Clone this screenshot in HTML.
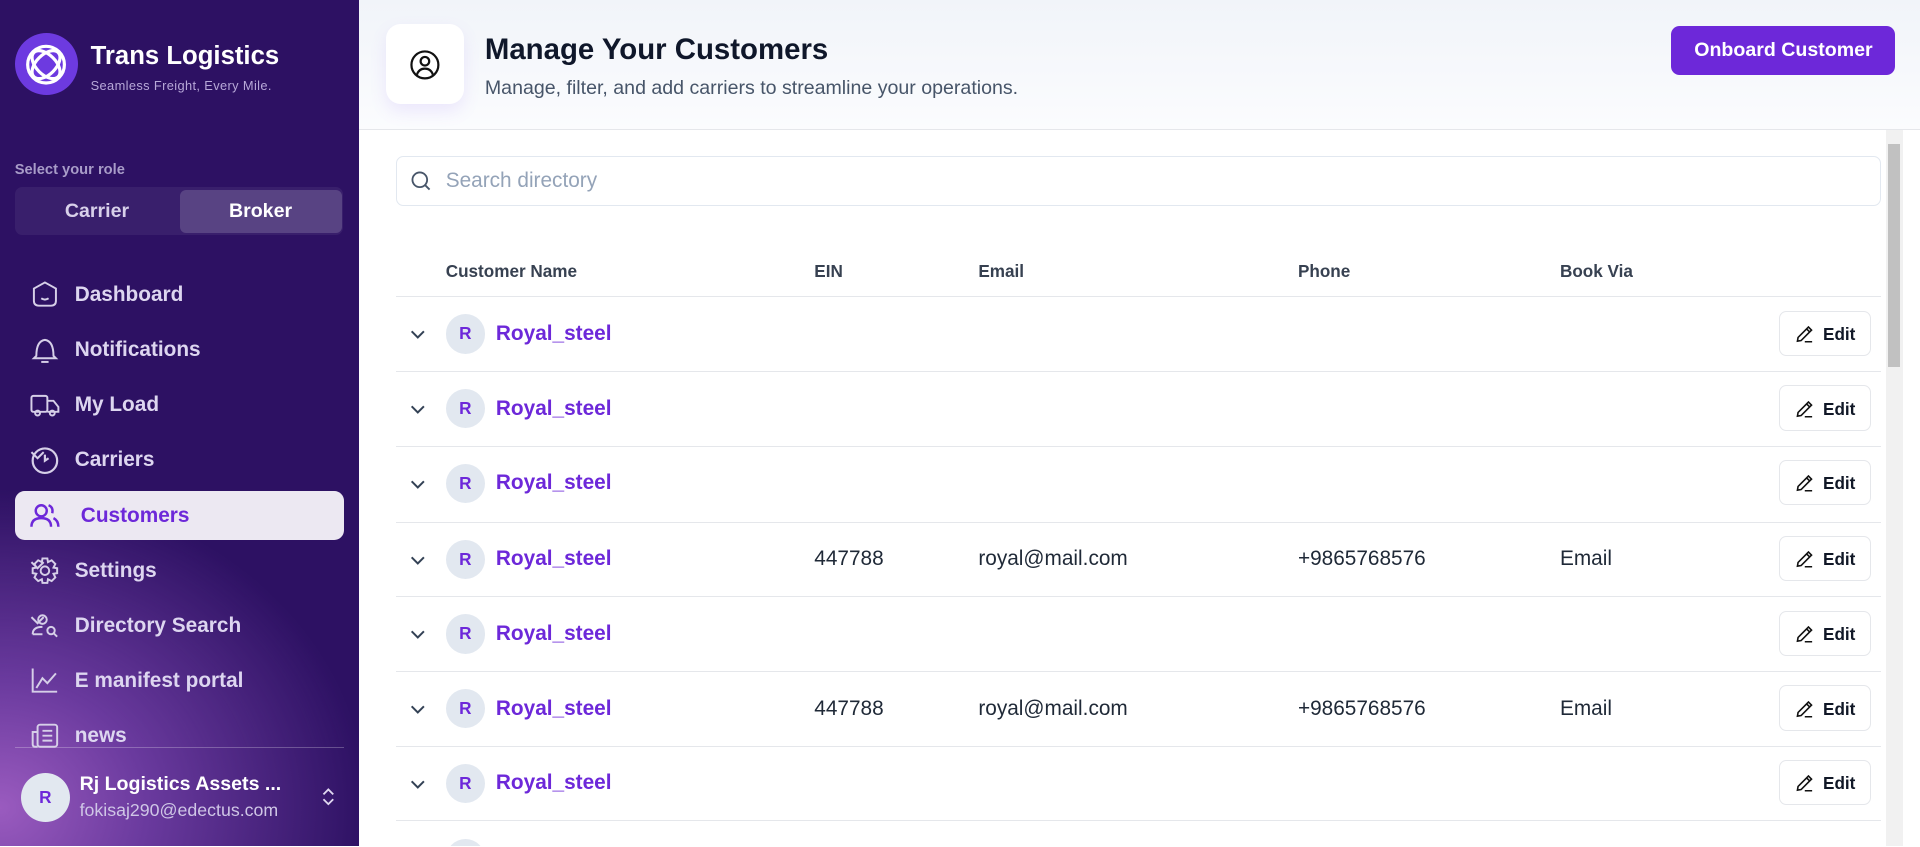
<!DOCTYPE html>
<html><head><meta charset="utf-8"><style>
*{box-sizing:border-box;margin:0;padding:0}
html,body{width:1920px;height:847px;overflow:hidden;background:#fff}
#w{zoom:1.22449;width:1568px;height:691px;position:relative;font-family:"Liberation Sans",sans-serif;overflow:hidden}
.sb{position:absolute;left:0;top:0;width:293px;height:691px;background:radial-gradient(ellipse 300px 260px at 0px 660px,#9a5bbf 0%,#6a3a9e 40%,rgba(46,16,100,0) 100%),#2d1163}
.abs{position:absolute}
.nav{position:absolute;left:12px;width:269px;height:40px;display:flex;align-items:center;color:#ddd6f0;font-size:17px;font-weight:bold}
.nav svg{position:absolute;left:12px;top:8px}
.nav span{position:absolute;left:49px}
.chev{position:absolute;left:240px;top:12px}
.main{position:absolute;left:293px;top:0;width:1275px;height:691px;overflow:hidden}
.hdr{position:absolute;left:0;top:0;width:1275px;height:106px;background:linear-gradient(#f1f4f9,#fbfcfe);border-bottom:1px solid #e5e7eb}
.th{position:absolute;top:213px;font-size:14px;font-weight:bold;color:#374151}
.row{position:absolute;left:30px;width:1213px;height:61px;border-top:1px solid #e5e7eb;overflow:hidden}
.row .cv{position:absolute;left:10px;top:22px}
.row .av{position:absolute;left:41px;top:14px;width:32px;height:32px;border-radius:50%;background:#e2e8f0;color:#6d28d9;font-size:14px;font-weight:bold;text-align:center;line-height:32px}
.row .nm{position:absolute;left:82px;top:20px;font-size:17px;font-weight:bold;color:#6d28d9}
.row .c{position:absolute;top:20px;font-size:17px;color:#1f2937}
.row .ed{position:absolute;left:1130px;top:11px;width:75px;height:37px;border:1px solid #e5e7eb;border-radius:6px;font-size:14px;font-weight:bold;color:#111827;background:#fff}
.row .ed svg{position:absolute;left:12px;top:10px}
.row .ed b{position:absolute;left:35px;top:10px}
</style></head><body><div id="w">
<div class="sb">
 <div class="abs" style="left:12px;top:27px;width:52px;height:51px;border-radius:50%;background:#6d3ae0"></div>
 <svg class="abs" style="left:20px;top:34px" width="36" height="37" viewBox="0 0 36 36" fill="none" stroke="#fff" stroke-width="2.6"><circle cx="18" cy="18" r="15"/><ellipse cx="18" cy="18" rx="14" ry="8" transform="rotate(45 18 18)"/><ellipse cx="18" cy="18" rx="14" ry="8" transform="rotate(-45 18 18)"/></svg>
 <div class="abs" style="left:74px;top:34px;color:#fff;font-size:21px;font-weight:bold">Trans Logistics</div>
 <div class="abs" style="left:74px;top:64px;color:#b7a8d8;font-size:10.5px;letter-spacing:0.3px">Seamless Freight, Every Mile.</div>
 <div class="abs" style="left:12px;top:132px;color:#a89cc8;font-size:12px;font-weight:bold">Select your role</div>
 <div class="abs" style="left:12px;top:153px;width:268px;height:39px;border-radius:6px;background:rgba(255,255,255,0.06)"></div>
 <div class="abs" style="left:147px;top:155px;width:132px;height:35px;border-radius:5px;background:rgba(255,255,255,0.16)"></div>
 <div class="abs" style="left:53px;top:163px;color:#d8d0ea;font-size:16px;font-weight:bold">Carrier</div>
 <div class="abs" style="left:187px;top:163px;color:#fff;font-size:16px;font-weight:bold">Broker</div>

 <div class="nav" style="top:221px"><svg width="26" height="24" viewBox="0 0 26 24" fill="none" stroke="#d6cfe8" stroke-width="1.6"><path d="M4 7 L13 2 L22 7 L22 17 Q22 21 18 21 L8 21 Q4 21 4 17Z"/><path d="M10 15 Q13 17 16 15"/></svg><span>Dashboard</span></div>
 <div class="nav" style="top:266px"><svg width="26" height="24" viewBox="0 0 26 24" fill="none" stroke="#d6cfe8" stroke-width="1.6"><path d="M6 17 Q6 5 13 4 Q20 5 20 17 L22 19 L4 19Z"/><path d="M10 22 L16 22"/></svg><span>Notifications</span></div>
 <div class="nav" style="top:311px"><svg width="26" height="24" viewBox="0 0 26 24" fill="none" stroke="#d6cfe8" stroke-width="1.6"><rect x="2" y="4" width="13" height="13" rx="1.5"/><path d="M15 8 L20 8 L24 13 L24 17 L15 17"/><circle cx="7" cy="18" r="2"/><circle cx="19" cy="18" r="2"/></svg><span>My Load</span></div>
 <div class="nav" style="top:356px"><svg width="26" height="24" viewBox="0 0 26 24" fill="none" stroke="#d6cfe8" stroke-width="1.8"><circle cx="13" cy="12" r="10"/><path d="M13 7 L13 12 L16 10"/></svg><span>Carriers</span><svg class="chev" width="14" height="14" viewBox="0 0 14 14" fill="none" stroke="#d6cfe8" stroke-width="1.6"><path d="M2 5 L7 10 L12 5"/></svg></div>
 <div class="nav" style="top:401px;background:#ece8f2;border-radius:8px;color:#6d28d9"><svg width="26" height="24" viewBox="0 0 26 24" fill="none" stroke="#6d28d9" stroke-width="2"><circle cx="10" cy="8" r="4.5"/><path d="M2 21 Q2 14 10 14 Q18 14 18 21"/><path d="M16 3.5 Q20 5 19 10 M20 14 Q24 16 24 21"/></svg><span style="left:54px">Customers</span></div>
 <div class="nav" style="top:446px"><svg width="26" height="24" viewBox="0 0 26 24" fill="none" stroke="#d6cfe8" stroke-width="1.6"><circle cx="13" cy="12" r="3.5"/><path d="M11 2 L15 2 L15.5 5 L18.5 3.5 L21.5 6.5 L20 9.5 L23 10 L23 14 L20 14.5 L21.5 17.5 L18.5 20.5 L15.5 19 L15 22 L11 22 L10.5 19 L7.5 20.5 L4.5 17.5 L6 14.5 L3 14 L3 10 L6 9.5 L4.5 6.5 L7.5 3.5 L10.5 5Z"/></svg><span>Settings</span><svg class="chev" width="14" height="14" viewBox="0 0 14 14" fill="none" stroke="#d6cfe8" stroke-width="1.6"><path d="M2 5 L7 10 L12 5"/></svg></div>
 <div class="nav" style="top:491px"><svg width="26" height="24" viewBox="0 0 26 24" fill="none" stroke="#d6cfe8" stroke-width="1.6"><circle cx="11" cy="7" r="3.5"/><path d="M3 19 Q3 13 11 13"/><path d="M3 19 L11 19"/><circle cx="18" cy="16" r="3"/><path d="M20 18 L23 21"/></svg><span>Directory Search</span><svg class="chev" width="14" height="14" viewBox="0 0 14 14" fill="none" stroke="#d6cfe8" stroke-width="1.6"><path d="M2 5 L7 10 L12 5"/></svg></div>
 <div class="nav" style="top:536px"><svg width="26" height="24" viewBox="0 0 26 24" fill="none" stroke="#d6cfe8" stroke-width="1.6"><path d="M3 2 L3 21 L23 21"/><path d="M6 18 L11 10 L15 14 L22 6"/></svg><span>E manifest portal</span></div>
 <div class="nav" style="top:581px"><svg width="26" height="24" viewBox="0 0 26 24" fill="none" stroke="#d6cfe8" stroke-width="1.6"><rect x="7" y="3" width="16" height="18" rx="2"/><path d="M7 9 L3 9 L3 19 Q3 21 5 21 L7 21 M11 8 L19 8 M11 12 L19 12 M11 16 L19 16"/></svg><span>news</span></div>
 <div class="abs" style="left:0;top:611px;width:293px;height:80px;background:radial-gradient(ellipse 300px 260px at 0px 49px,#9a5bbf 0%,#6a3a9e 40%,rgba(46,16,100,0) 100%),#2d1163"></div>
 <div class="abs" style="left:12px;top:610px;width:269px;height:1px;background:rgba(255,255,255,0.25)"></div>
 <div class="abs" style="left:17px;top:631px;width:40px;height:40px;border-radius:50%;background:#e2e8f0;color:#6d28d9;font-size:14px;font-weight:bold;text-align:center;line-height:40px">R</div>
 <div class="abs" style="left:65px;top:631px;color:#fff;font-size:16px;font-weight:bold">Rj Logistics Assets ...</div>
 <div class="abs" style="left:65px;top:653px;color:#cfc6e6;font-size:14.5px">fokisaj290@edectus.com</div>
 <svg class="abs" style="left:262px;top:643px" width="12" height="16" viewBox="0 0 12 16" fill="none" stroke="#e0d8f0" stroke-width="1.5"><path d="M2 6 L6 2 L10 6 M2 10 L6 14 L10 10"/></svg>
</div>
<div class="main">
 <div class="hdr"></div>
 <div class="abs" style="left:22px;top:20px;width:64px;height:65px;background:#fff;border-radius:12px;box-shadow:0 6px 14px rgba(139,92,246,0.12)"></div>
 <svg class="abs" style="left:41px;top:40px" width="26" height="26" viewBox="0 0 26 26" fill="none" stroke="#111" stroke-width="1.8"><circle cx="13" cy="13" r="11"/><circle cx="13" cy="10" r="3.5"/><path d="M6.5 21 Q8 16 13 16 Q18 16 19.5 21"/></svg>
 <div class="abs" style="left:103px;top:27px;font-size:24px;font-weight:bold;color:#0f172a">Manage Your Customers</div>
 <div class="abs" style="left:103px;top:63px;font-size:16px;color:#475569">Manage, filter, and add carriers to streamline your operations.</div>
 <div class="abs" style="left:1072px;top:21px;width:183px;height:40px;border-radius:7px;background:#6d28d9;color:#fff;font-size:16px;font-weight:bold;text-align:center;line-height:40px">Onboard Customer</div>
 <div class="abs" style="left:30px;top:127px;width:1213px;height:41px;border:1px solid #e2e8f0;border-radius:6px"></div>
 <svg class="abs" style="left:42px;top:139px" width="18" height="18" viewBox="0 0 18 18" fill="none" stroke="#475569" stroke-width="1.5"><circle cx="8" cy="8" r="6"/><path d="M12.5 12.5 L16 16"/></svg>
 <div class="abs" style="left:71px;top:138px;font-size:17px;color:#94a3b8">Search directory</div>
 <div class="th" style="left:71px">Customer Name</div><div class="th" style="left:372px">EIN</div><div class="th" style="left:506px">Email</div><div class="th" style="left:767px">Phone</div><div class="th" style="left:981px">Book Via</div>
 <div class="row" style="top:242px"><svg class="cv" width="16" height="16" viewBox="0 0 16 16" fill="none" stroke="#334155" stroke-width="1.6"><path d="M3 6 L8 11 L13 6"/></svg><div class="av">R</div><div class="nm">Royal_steel</div><div class="ed"><svg width="16" height="16" viewBox="0 0 16 16" fill="none" stroke="#111" stroke-width="1.3"><path d="M2 14 L2.5 11 L11 2.5 L13.5 5 L5 13.5Z M9.5 4 L12 6.5 M8 14.5 L14 14.5"/></svg><b>Edit</b></div></div>
 <div class="row" style="top:303px"><svg class="cv" width="16" height="16" viewBox="0 0 16 16" fill="none" stroke="#334155" stroke-width="1.6"><path d="M3 6 L8 11 L13 6"/></svg><div class="av">R</div><div class="nm">Royal_steel</div><div class="ed"><svg width="16" height="16" viewBox="0 0 16 16" fill="none" stroke="#111" stroke-width="1.3"><path d="M2 14 L2.5 11 L11 2.5 L13.5 5 L5 13.5Z M9.5 4 L12 6.5 M8 14.5 L14 14.5"/></svg><b>Edit</b></div></div>
 <div class="row" style="top:364px"><svg class="cv" width="16" height="16" viewBox="0 0 16 16" fill="none" stroke="#334155" stroke-width="1.6"><path d="M3 6 L8 11 L13 6"/></svg><div class="av">R</div><div class="nm">Royal_steel</div><div class="ed"><svg width="16" height="16" viewBox="0 0 16 16" fill="none" stroke="#111" stroke-width="1.3"><path d="M2 14 L2.5 11 L11 2.5 L13.5 5 L5 13.5Z M9.5 4 L12 6.5 M8 14.5 L14 14.5"/></svg><b>Edit</b></div></div>
 <div class="row" style="top:426px"><svg class="cv" width="16" height="16" viewBox="0 0 16 16" fill="none" stroke="#334155" stroke-width="1.6"><path d="M3 6 L8 11 L13 6"/></svg><div class="av">R</div><div class="nm">Royal_steel</div><div class="c" style="left:342px">447788</div><div class="c" style="left:476px">royal@mail.com</div><div class="c" style="left:737px">+9865768576</div><div class="c" style="left:951px">Email</div><div class="ed"><svg width="16" height="16" viewBox="0 0 16 16" fill="none" stroke="#111" stroke-width="1.3"><path d="M2 14 L2.5 11 L11 2.5 L13.5 5 L5 13.5Z M9.5 4 L12 6.5 M8 14.5 L14 14.5"/></svg><b>Edit</b></div></div>
 <div class="row" style="top:487px"><svg class="cv" width="16" height="16" viewBox="0 0 16 16" fill="none" stroke="#334155" stroke-width="1.6"><path d="M3 6 L8 11 L13 6"/></svg><div class="av">R</div><div class="nm">Royal_steel</div><div class="ed"><svg width="16" height="16" viewBox="0 0 16 16" fill="none" stroke="#111" stroke-width="1.3"><path d="M2 14 L2.5 11 L11 2.5 L13.5 5 L5 13.5Z M9.5 4 L12 6.5 M8 14.5 L14 14.5"/></svg><b>Edit</b></div></div>
 <div class="row" style="top:548px"><svg class="cv" width="16" height="16" viewBox="0 0 16 16" fill="none" stroke="#334155" stroke-width="1.6"><path d="M3 6 L8 11 L13 6"/></svg><div class="av">R</div><div class="nm">Royal_steel</div><div class="c" style="left:342px">447788</div><div class="c" style="left:476px">royal@mail.com</div><div class="c" style="left:737px">+9865768576</div><div class="c" style="left:951px">Email</div><div class="ed"><svg width="16" height="16" viewBox="0 0 16 16" fill="none" stroke="#111" stroke-width="1.3"><path d="M2 14 L2.5 11 L11 2.5 L13.5 5 L5 13.5Z M9.5 4 L12 6.5 M8 14.5 L14 14.5"/></svg><b>Edit</b></div></div>
 <div class="row" style="top:609px"><svg class="cv" width="16" height="16" viewBox="0 0 16 16" fill="none" stroke="#334155" stroke-width="1.6"><path d="M3 6 L8 11 L13 6"/></svg><div class="av">R</div><div class="nm">Royal_steel</div><div class="ed"><svg width="16" height="16" viewBox="0 0 16 16" fill="none" stroke="#111" stroke-width="1.3"><path d="M2 14 L2.5 11 L11 2.5 L13.5 5 L5 13.5Z M9.5 4 L12 6.5 M8 14.5 L14 14.5"/></svg><b>Edit</b></div></div>
 <div class="row" style="top:670px;height:21px"><div class="av">R</div></div>
 <div class="abs" style="left:1247px;top:106px;width:14px;height:585px;background:#f1f1f1"></div>
 <div class="abs" style="left:1249px;top:118px;width:10px;height:182px;background:#c1c1c1"></div>
</div>
</div>
</body></html>
